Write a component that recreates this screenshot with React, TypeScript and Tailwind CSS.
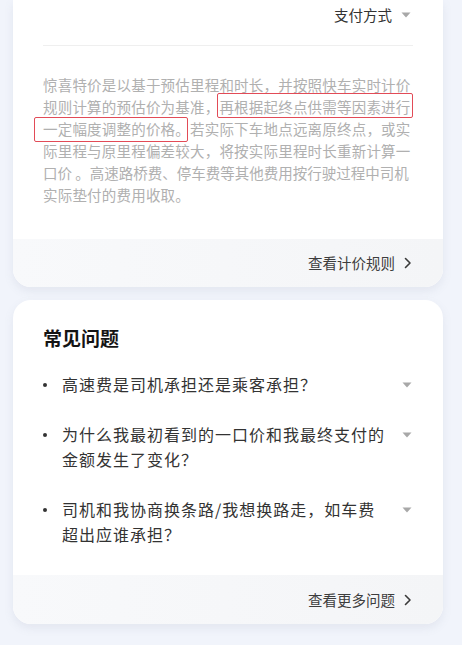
import React from 'react';

const font = { fontFamily: '"Noto Sans CJK SC", "Noto Sans", sans-serif' };

const Caret: React.FC = () => (
  <svg width="10" height="6" viewBox="0 0 10 6" className="shrink-0">
    <path d="M0.5 0.5 L9.5 0.5 L5 5.5 Z" fill="#a8a8a8" />
  </svg>
);

const Chevron: React.FC = () => (
  <svg width="8" height="12" viewBox="0 0 8 12" className="shrink-0">
    <path d="M1.5 1.5 L6 6 L1.5 10.5" fill="none" stroke="#3a3a3a" strokeWidth="1.6" strokeLinecap="round" strokeLinejoin="round" />
  </svg>
);

const CardFooter: React.FC<{ label: string; className?: string }> = ({ label, className }) => (
  <div className={`flex items-center justify-end gap-[9px] bg-gradient-to-r from-[#f8f9fb] to-[#f4f5f7] pr-[31px] ${className ?? ''}`}>
    <span className="text-[14.5px] leading-[22px] text-[#3d3d3d]">{label}</span>
    <Chevron />
  </div>
);

// red annotation frame drawn over the highlighted phrase
const Mark: React.FC<{ children: React.ReactNode; className: string }> = ({ children, className }) => (
  <span className="relative">
    {children}
    <span className={`absolute rounded-[2px] border-solid border-[length:1.5px] border-[#e24b57] ${className}`} />
  </span>
);

const faqs = [
  ['高速费是司机承担还是乘客承担？'],
  ['为什么我最初看到的一口价和我最终支付的', '金额发生了变化？'],
  ['司机和我协商换条路/我想换路走，如车费', '超出应谁承担？'],
];

export default function App() {
  return (
    <div className="min-h-[645px] w-[462px] bg-[#f1f4fb] pl-[13px] overflow-hidden" style={font}>
      {/* pricing card, top cut off */}
      <div className="w-[430px] rounded-b-[18px] bg-white shadow-[0_4px_10px_rgba(120,130,160,0.12)] overflow-hidden">
        <div className="px-[30px]">
          <div className="flex items-center justify-end gap-[9px] pt-[4px] pr-[2px]">
            <span className="text-[14.5px] leading-[22px] text-[#333]">支付方式</span>
            <Caret />
          </div>
          <div className="mt-[19px] h-px bg-[#efefef]" />
          <div className="mt-[28px] pb-[33px] text-[14.5px] leading-[22px] text-[#b0b0b0] tracking-[0.2px] whitespace-nowrap">
            <div>惊喜特价是以基于预估里程和时长，并按照快车实时计价</div>
            <div>
              规则计算的预估价为基准，
              <Mark className="left-[-2px] right-[-2px] top-[-3px] bottom-[-1px]">再根据起终点供需等因素进行</Mark>
            </div>
            <div>
              <Mark className="left-[-9px] right-[2px] top-[-1px] bottom-[-3px]">一定幅度调整的价格。</Mark>
              若实际下车地点远离原终点，或实
            </div>
            <div>际里程与原里程偏差较大，将按实际里程时长重新计算一</div>
            <div className="tracking-[0px]">口价 。高速路桥费、停车费等其他费用按行驶过程中司机</div>
            <div>实际垫付的费用收取。</div>
          </div>
        </div>
        <CardFooter label="查看计价规则" className="h-[48px]" />
      </div>

      {/* FAQ card */}
      <div className="mt-[13px] w-[430px] rounded-[18px] bg-white shadow-[0_4px_10px_rgba(120,130,160,0.12)] overflow-hidden">
        <div className="px-[30px] pt-[25px] pb-[28px]">
          <h2 className="text-[19px] leading-[26px] font-bold text-[#141414]">常见问题</h2>
          <div className="mt-[21px] flex flex-col gap-[25px]">
            {faqs.map((lines, i) => (
              <div key={i} className="flex items-start">
                <div className="flex h-[25px] w-[19px] shrink-0 items-center">
                  <span className="h-[4px] w-[4px] rounded-full bg-[#333]" />
                </div>
                <div className="flex-1 text-[16px] leading-[25px] text-[#333] tracking-[1px]">
                  {lines.map((l) => (
                    <div key={l} className="whitespace-nowrap">{l}</div>
                  ))}
                </div>
                <div className="flex h-[25px] items-center pr-[1px]">
                  <Caret />
                </div>
              </div>
            ))}
          </div>
        </div>
        <CardFooter label="查看更多问题" className="h-[49px]" />
      </div>
    </div>
  );
}
